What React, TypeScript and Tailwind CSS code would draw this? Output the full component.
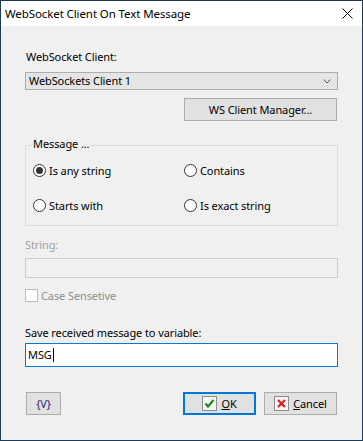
import React from 'react'

const font = { fontFamily: '"Noto Sans", "Segoe UI", sans-serif' }

function Radio({ checked, label }: { checked?: boolean; label: string }) {
  return (
    <div className="flex h-[13px] items-center">
      <span className="flex h-[13px] w-[13px] shrink-0 items-center justify-center rounded-full border border-[#333333] bg-white">
        {checked && <span className="h-[7px] w-[7px] rounded-full bg-[#333333]" />}
      </span>
      <span className="ml-[3px] leading-[16px]">{label}</span>
    </div>
  )
}

function CheckIcon() {
  return (
    <svg width="15" height="15" viewBox="0 0 15 15">
      <rect x="0.5" y="0.5" width="14" height="14" fill="#f4f4f4" stroke="#8c8c8c" />
      <path d="M3.5 7.5 L6 10.5 L11.5 4" fill="none" stroke="#1e8a1e" strokeWidth="2.2" />
    </svg>
  )
}

function CrossIcon() {
  return (
    <svg width="15" height="15" viewBox="0 0 15 15">
      <rect x="0.5" y="0.5" width="14" height="14" fill="#f4f4f4" stroke="#8c8c8c" />
      <path d="M4 4 L11 11 M11 4 L4 11" fill="none" stroke="#d8201c" strokeWidth="2.2" />
    </svg>
  )
}

export default function App() {
  return (
    <div
      className="flex h-[441px] w-[363px] flex-col border border-[#1d3b58] bg-[#f0f0f0] text-[11px] tracking-[-0.1px] text-black"
      style={font}
    >
      {/* title bar */}
      <div className="flex h-[25px] shrink-0 items-center justify-between bg-white pl-[4px] pr-[9px]">
        <span className="text-[11.5px] leading-[16px]">WebSocket Client On Text Message</span>
        <svg width="11" height="11" viewBox="0 0 11 11">
          <path d="M0.5 0.5 L10.5 10.5 M10.5 0.5 L0.5 10.5" stroke="#000" strokeWidth="1" />
        </svg>
      </div>

      <div className="flex flex-col px-[24px]">
        <div className="mt-[23px] h-[16px] pl-[1px] leading-[16px]">WebSocket Client:</div>

        <div className="mt-[7px] flex h-[18px] items-center justify-between border border-[#adadad] bg-[#e5e5e5] pl-[3px] pr-[6px]">
          <span className="leading-[16px]">WebSockets Client 1</span>
          <svg width="8" height="5" viewBox="0 0 8 5">
            <path d="M0.5 0.5 L4 4 L7.5 0.5" fill="none" stroke="#555" strokeWidth="1" />
          </svg>
        </div>

        <button className="mr-[1px] mt-[8px] flex h-[23px] w-[153px] items-center justify-center self-end border border-[#adadad] bg-[#e1e1e1] leading-[16px]">
          WS Client Manager...
        </button>

        <div className="relative mt-[24px] h-[81px] border border-[#dcdcdc]">
          <span className="absolute left-[6px] top-[-10px] bg-[#f0f0f0] px-[1px] leading-[16px]">Message ...</span>
          <div className="grid grid-cols-[151px_1fr] gap-y-[22px] pl-[7px] pt-[18px]">
            <Radio checked label="Is any string" />
            <Radio label="Contains" />
            <Radio label="Starts with" />
            <Radio label="Is exact string" />
          </div>
        </div>

        <div className="mt-[11px] h-[16px] leading-[16px] text-[#a0a0a0]">String:</div>
        <div className="mt-[5px] h-[20px] border border-[#cccccc] bg-[#f0f0f0]" />

        <div className="mt-[11px] flex h-[13px] items-center">
          <span className="h-[13px] w-[13px] shrink-0 border border-[#bcbcbc] bg-white" />
          <span className="ml-[3px] leading-[16px] text-[#8d8d8d]">Case Sensetive</span>
        </div>

        <div className="mt-[23px] h-[16px] leading-[16px]">Save received message to variable:</div>
        <div className="mt-[2px] flex h-[24px] items-center border border-[#0078d7] bg-white pl-[2px]">
          <span className="leading-[16px]">MSG</span>
          <span className="ml-[1px] h-[14px] w-[1px] bg-black" />
        </div>

        <div className="mt-[25px] flex h-[23px] items-stretch">
          <button className="ml-[1px] flex w-[35px] items-center justify-center border border-[#adadad] bg-[#e1e1e1] leading-[16px] text-[#2a1f6e]">
            {'{V}'}
          </button>
          <div className="flex-1" />
          <button className="flex w-[73px] items-center justify-center gap-[4px] border-2 border-[#0078d7] bg-[#e1e1e1] leading-[16px]">
            <CheckIcon />
            <span>
              <span className="underline">O</span>K
            </span>
          </button>
          <button className="ml-[8px] mr-[1px] flex w-[73px] items-center justify-center gap-[4px] border border-[#adadad] bg-[#e1e1e1] leading-[16px]">
            <CrossIcon />
            <span>
              <span className="underline">C</span>ancel
            </span>
          </button>
        </div>
      </div>
    </div>
  )
}
